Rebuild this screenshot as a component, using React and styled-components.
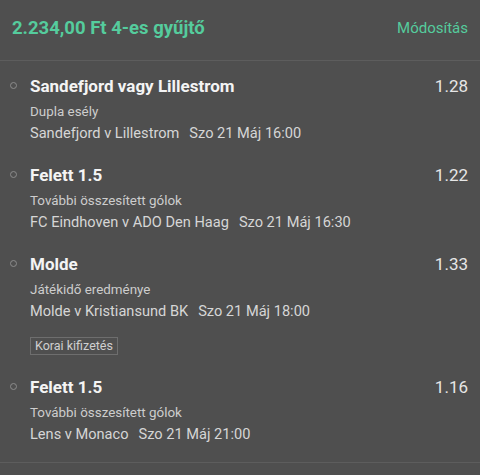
import React from 'react'
import styled, { createGlobalStyle } from 'styled-components'

const GlobalStyle = createGlobalStyle`
  html, body {
    margin: 0;
    padding: 0;
    background: #4f4f4f;
  }
  body {
    font-family: Roboto, "Noto Sans", sans-serif;
  }
`

const selections = [
  {
    id: 1,
    pick: 'Sandefjord vagy Lillestrom',
    market: 'Dupla esély',
    event: 'Sandefjord v Lillestrom',
    time: 'Szo 21 Máj 16:00',
    odds: '1.28',
  },
  {
    id: 2,
    pick: 'Felett 1.5',
    market: 'További összesített gólok',
    event: 'FC Eindhoven v ADO Den Haag',
    time: 'Szo 21 Máj 16:30',
    odds: '1.22',
  },
  {
    id: 3,
    pick: 'Molde',
    market: 'Játékidő eredménye',
    event: 'Molde v Kristiansund BK',
    time: 'Szo 21 Máj 18:00',
    odds: '1.33',
    earlyPayout: true,
  },
  {
    id: 4,
    pick: 'Felett 1.5',
    market: 'További összesített gólok',
    event: 'Lens v Monaco',
    time: 'Szo 21 Máj 21:00',
    odds: '1.16',
  },
]

export default function App() {
  return (
    <>
      <GlobalStyle />
      <Slip>
        <Header>
          <Title>2.234,00 Ft 4-es gyűjtő</Title>
          <EditLink type="button">Módosítás</EditLink>
        </Header>
        <List>
          {selections.map((sel) => (
            <Item key={sel.id}>
              <Dot />
              <Body>
                <TopRow>
                  <Pick>{sel.pick}</Pick>
                  <Odds>{sel.odds}</Odds>
                </TopRow>
                <Market>{sel.market}</Market>
                <EventLine>
                  {sel.event}
                  <Time>{sel.time}</Time>
                </EventLine>
                {sel.earlyPayout && <Badge>Korai kifizetés</Badge>}
              </Body>
            </Item>
          ))}
        </List>
      </Slip>
    </>
  )
}

const Slip = styled.div`
  width: 480px;
  height: 475px;
  background: #4f4f4f;
  overflow: hidden;
`

const Header = styled.div`
  display: flex;
  align-items: center;
  justify-content: space-between;
  height: 56px;
  padding: 0 12px 4px 12px;
  border-bottom: 1px solid #5d5d5d;
`

const Title = styled.h1`
  margin: 0;
  font-size: 18.5px;
  font-weight: 700;
  color: #55cc9d;
`

const EditLink = styled.button`
  border: none;
  background: none;
  padding: 0;
  font-family: inherit;
  font-size: 15px;
  color: #55cc9d;
  cursor: pointer;
`

const List = styled.ul`
  list-style: none;
  margin: 0;
  padding: 0 0 11px;
  border-bottom: 1px solid #5d5d5d;
`

const Item = styled.li`
  display: flex;
  padding: 12px 12px 7px 10px;
`

const Dot = styled.span`
  flex: none;
  width: 5px;
  height: 5px;
  margin-top: 9px;
  margin-right: 13px;
  border: 1.5px solid #8c8c8c;
  border-radius: 50%;
`

const Body = styled.div`
  flex: 1;
  display: flex;
  flex-direction: column;
  align-items: flex-start;
`

const TopRow = styled.div`
  align-self: stretch;
  display: flex;
  justify-content: space-between;
  line-height: 26px;
`

const Pick = styled.span`
  font-size: 17px;
  font-weight: 700;
  color: #f4f4f4;
`

const Odds = styled.span`
  font-size: 17px;
  color: #e6e6e6;
`

const Market = styled.div`
  margin-top: 2px;
  font-size: 13.4px;
  line-height: 22px;
  color: #cdcdcd;
`

const EventLine = styled.div`
  font-size: 14.6px;
  line-height: 20px;
  color: #d6d6d6;
`

const Time = styled.span`
  margin-left: 10px;
`

const Badge = styled.span`
  margin-top: 16px;
  padding: 0 4px;
  line-height: 16px;
  font-size: 12.5px;
  color: #d0d0d0;
  border: 1px solid #6e6e6e;
`
